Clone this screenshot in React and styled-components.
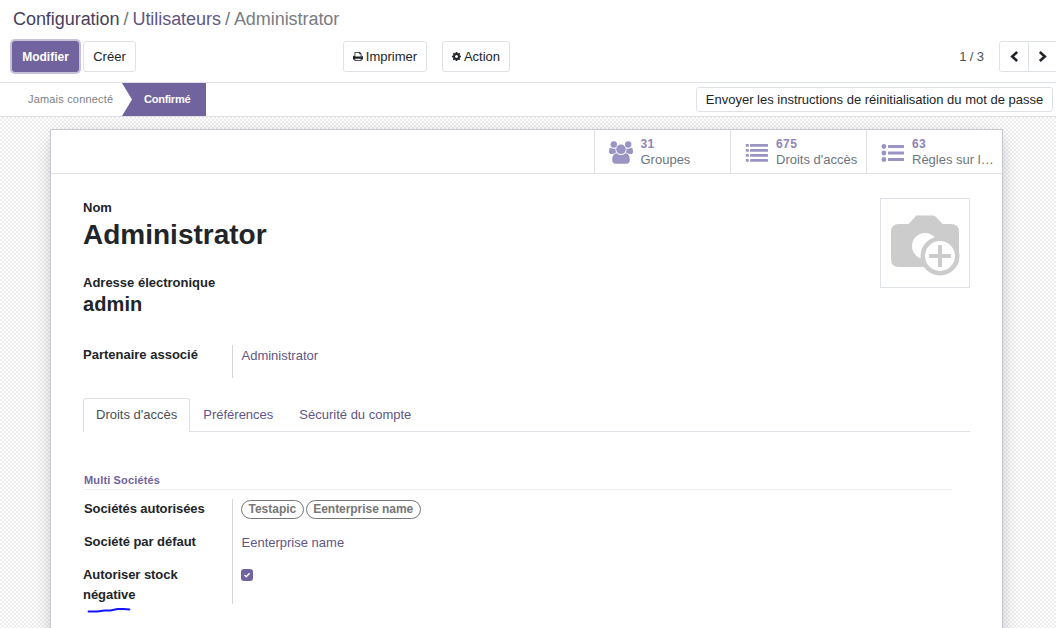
import React from "react";
import styled, { createGlobalStyle } from "styled-components";

const GlobalStyle = createGlobalStyle`
  * { box-sizing: border-box; }
  body {
    margin: 0;
    overflow: hidden;
    background: #fff;
    color: #212529;
    font-family: "Liberation Sans", Arial, sans-serif;
    font-size: 13px;
    line-height: 20px;
  }
`;

const Page = styled.div`
  display: flex;
  flex-direction: column;
  width: 1056px;
  height: 628px;
  overflow: hidden;
`;

const ControlPanel = styled.header`
  height: 83px;
  flex: none;
  padding: 8px 0 0 12px;
  border-bottom: 1px solid #dee2e6;
`;

const Breadcrumb = styled.nav`
  display: flex;
  gap: 4px;
  padding-left: 1px;
  font-size: 18px;
  line-height: 22px;
  color: #6c757d;
  white-space: nowrap;
`;

const Crumb = styled.span`
  color: ${(p) => p.$color};
  letter-spacing: -0.05px;
`;

const Toolbar = styled.div`
  display: flex;
  align-items: center;
  height: 31px;
  margin-top: 11px;
`;

const Button = styled.button`
  display: flex;
  align-items: center;
  justify-content: center;
  gap: 3px;
  flex: none;
  width: ${(p) => p.$width}px;
  height: ${(p) => p.$height || 31}px;
  margin-left: ${(p) => p.$offset || 0}px;
  padding: 0;
  border: 1px solid ${(p) => (p.$primary ? "#71639e" : "#dee2e6")};
  border-radius: 3px;
  background: ${(p) => (p.$primary ? "#71639e" : "#fff")};
  color: ${(p) => (p.$primary ? "#fff" : "#212529")};
  box-shadow: ${(p) => (p.$primary ? "0 0 0 2px #c6c1d8" : "none")};
  font: ${(p) => (p.$primary ? "bold" : "normal")} ${(p) => p.$size || 13}px "Liberation Sans", Arial, sans-serif;
  white-space: nowrap;
`;

const Pager = styled.div`
  display: flex;
  align-items: center;
  margin-left: auto;
  color: #495057;
`;

const PagerCount = styled.span`
  margin-right: 15px;
  letter-spacing: -0.1px;
`;

const PagerButton = styled.button`
  display: flex;
  align-items: center;
  justify-content: center;
  width: ${(p) => (p.$last ? 27 : 30)}px;
  height: 31px;
  padding: 0;
  border: 1px solid #dee2e6;
  border-right-width: ${(p) => (p.$last ? 0 : 1)}px;
  border-left-width: ${(p) => (p.$last ? 0 : 1)}px;
  border-radius: ${(p) => (p.$last ? "0" : "3px 0 0 3px")};
  background: #fff;
  color: #212529;
`;

const StatusBar = styled.div`
  display: flex;
  align-items: center;
  flex: none;
  height: 34px;
  padding: 0 3px 0 28px;
  border-bottom: 1px solid #dee2e6;
  font-size: 11px;
`;

const Stage = styled.span`
  width: 94px;
  padding-bottom: 1px;
  color: #7c7f84;
  letter-spacing: 0.18px;
`;

const ActiveStage = styled.span`
  width: 84px;
  height: 33px;
  padding-left: 22px;
  background: #71639e;
  clip-path: polygon(0 0, 100% 0, 100% 100%, 0 100%, 10px 50%);
  color: #fff;
  font-weight: bold;
  line-height: 33px;
  letter-spacing: -0.25px;
`;

const Content = styled.main`
  flex: 1;
  min-height: 0;
  padding: 12px 53px 0 50px;
  background: repeating-conic-gradient(#ededed 0 25%, #fff 0 50%) 0 0 / 4px 4px;
`;

const Sheet = styled.section`
  height: 560px;
  border: 1px solid #c8c8d3;
  background: #fff;
  box-shadow: 0 5px 20px -6px rgba(0, 0, 0, 0.35);
`;

const StatBox = styled.div`
  display: flex;
  justify-content: flex-end;
  height: 44px;
  border-bottom: 1px solid #dee2e6;
`;

const Stat = styled.div`
  display: flex;
  align-items: center;
  width: 136px;
  padding: 1px 0 0 14px;
  border-left: 1px solid #dee2e6;
  color: #9a94c4;

  svg {
    flex: none;
    margin-top: 1px;
  }
`;

const StatText = styled.div`
  display: flex;
  flex-direction: column;
  margin-left: ${(p) => p.$gap || 8}px;
  color: #6c757d;
  line-height: 15px;
  white-space: nowrap;
`;

const StatValue = styled.b`
  color: #8f84b7;
  font-size: 12px;
  letter-spacing: 0.4px;
`;

const SheetBody = styled.div`
  padding: 24px 32px 0;
`;

const TitleRow = styled.div`
  display: flex;
  justify-content: space-between;
  height: 147px;
`;

const TitleBlock = styled.div`
  display: flex;
  flex-direction: column;
`;

const Label = styled.label`
  font-weight: bold;
  line-height: 20px;
  letter-spacing: ${(p) => p.$spacing || "0"};
  margin-left: ${(p) => p.$shift || 0}px;
`;

const Name = styled.h1`
  margin: 0 0 22px;
  font-size: 28px;
  line-height: 33px;
`;

const Login = styled.h2`
  margin: 0;
  font-size: 20px;
  line-height: 22px;
  letter-spacing: 0.1px;
`;

const Avatar = styled.div`
  width: 90px;
  height: 90px;
  border: 1px solid #dee2e6;
`;

const Group = styled.div`
  display: grid;
  grid-template-columns: 149px 1fr;
`;

const LabelColumn = styled.div`
  display: flex;
  flex-direction: column;
  gap: 13px;
  padding-left: ${(p) => p.$inset || 0}px;
`;

const ValueColumn = styled.div`
  display: flex;
  flex-direction: column;
  gap: 13px;
  height: ${(p) => p.$height}px;
  padding-left: 8px;
  border-left: 1px solid #d5d7da;
`;

const LinkText = styled.span`
  height: 20px;
  padding-left: 0.5px;
  color: #5f5685;
  line-height: 22px;
`;

const Tabs = styled.div`
  display: flex;
  height: 34px;
  margin-top: 20px;
  border-bottom: 1px solid #dee2e6;
`;

const Tab = styled.span`
  height: 34px;
  padding: ${(p) => (p.$active ? "6px 12px" : "7px 13px")};
  border: ${(p) => (p.$active ? "1px solid #dee2e6" : "none")};
  border-bottom: none;
  border-radius: 3px 3px 0 0;
  background: ${(p) => (p.$active ? "#fff" : "transparent")};
  color: ${(p) => (p.$active ? "#495057" : "#5f5685")};
`;

const SectionTitle = styled.h3`
  width: 869px;
  margin: 38px 0 9px;
  padding: 1px 0 0 1px;
  border-bottom: 1px solid #f1f1f4;
  color: #71639e;
  font-size: 11px;
  line-height: 18px;
  letter-spacing: 0.15px;
`;

const Tags = styled.div`
  display: flex;
  gap: 2px;
  height: 20px;
  padding-top: 1px;
`;

const Tag = styled.span`
  height: 19px;
  padding: 0 6.5px;
  border: 1px solid #777;
  border-radius: 10px;
  color: #777;
  font-size: 12px;
  font-weight: bold;
  line-height: 16px;
  letter-spacing: ${(p) => p.$spacing || "0"};
`;

const Checkbox = styled.span`
  display: flex;
  align-items: center;
  justify-content: center;
  width: 12px;
  height: 12px;
  margin-top: 4px;
  border-radius: 3px;
  background: #71639e;
`;

const Stroke = styled.svg`
  display: block;
  margin: 1px 0 0 4px;
`;

const PrintIcon = () => (
  <svg width="10" height="11" viewBox="0 0 1664 1792" fill="currentColor">
    <path d="M384 1536h896v-256h-896v256zm0-640h896v-384h-160q-40 0-68-28t-28-68v-160h-640v640zm1152 64q0-26-19-45t-45-19-45 19-19 45 19 45 45 19 45-19 19-45zm128 0v416q0 13-9.5 22.5t-22.5 9.5h-224v160q0 40-28 68t-68 28h-960q-40 0-68-28t-28-68v-160h-224q-13 0-22.5-9.5t-9.5-22.5v-416q0-79 56.5-135.5t135.5-56.5h64v-544q0-40 28-68t68-28h672q40 0 88 20t76 48l152 152q28 28 48 76t20 88v256h64q79 0 135.5 56.5t56.5 135.5z" />
  </svg>
);

const CogIcon = () => (
  <svg width="9" height="9" viewBox="128 128 1536 1536" fill="currentColor">
    <path d="M1152 896q0-106-75-181t-181-75-181 75-75 181 75 181 181 75 181-75 75-181zm512-109v222q0 12-8 23t-20 13l-185 28q-19 54-39 91 35 50 107 138 10 12 10 25t-9 23q-27 37-99 108t-94 71q-12 0-26-9l-138-108q-44 23-91 38-16 136-29 186-7 28-36 28h-222q-14 0-24.5-8.5t-11.5-21.5l-28-184q-49-16-90-37l-141 107q-10 9-25 9-14 0-25-11-126-114-165-168-7-10-7-23 0-12 8-23 15-21 51-66.5t54-70.5q-27-50-41-99l-183-27q-13-2-21-12.5t-8-23.5v-222q0-12 8-23t19-13l186-28q14-46 39-92-40-57-107-138-10-12-10-24 0-10 9-23 26-36 98.5-107.5t94.5-71.5q13 0 26 10l138 107q44-23 91-38 16-136 29-186 7-28 36-28h222q14 0 24.5 8.5t11.5 21.5l28 184q49 16 90 37l142-107q9-9 24-9 13 0 25 10 129 119 165 170 7 8 7 22 0 12-8 23-15 21-51 66.5t-54 70.5q26 50 41 98l183 28q13 2 21 12.5t8 23.5z" />
  </svg>
);

const UsersIcon = () => (
  <svg width="24" height="23" viewBox="0 0 1920 1792" fill="currentColor">
    <path d="M593 896q-162 5-265 128H194q-82 0-138-40.5T0 865q0-353 124-353 6 0 43.500 21t97.500 42.500T384 597q67 0 133-23-5 37-5 66 0 139 81 256zm1071 637q0 120-73 189.500t-194 69.500H523q-121 0-194-69.500T256 1533q0-53 3.500-103.500t14-109T300 1212t43-97.500 62-81 85.500-53.500T602 960q10 0 43 21.500t73 48 107 48 135 21.500 135-21.500 107-48 73-48 43-21.500q61 0 111.500 20t85.500 53.500 62 81 43 97.500 26.500 108.500 14 109 3.500 103.500z" />
    <circle cx="384" cy="256" r="256" />
    <circle cx="960" cy="640" r="384" />
    <circle cx="1536" cy="256" r="256" />
    <path d="M1920 865q0 78-56 118.500t-138 40.500h-134q-103-123-265-128 81-117 81-256 0-29-5-66 66 23 133 23 59 0 119-21.500t97.500-42.500 43.500-21q124 0 124 353z" />
  </svg>
);

const ListIcon = () => (
  <svg width="23" height="18" viewBox="0 0 23 18" fill="currentColor">
    {[0, 5, 10, 15].map((y) => (
      <g key={y}>
        <rect x="0.8" y={y} width="3" height="2.8" rx="0.4" />
        <rect x="5" y={y} width="18" height="2.8" rx="0.4" />
      </g>
    ))}
  </svg>
);

const BulletListIcon = () => (
  <svg width="23" height="18" viewBox="0 0 23 18" fill="currentColor">
    {[2.5, 9, 15.5].map((y) => (
      <g key={y}>
        <circle cx="2.9" cy={y} r="2.4" />
        <rect x="7" y={y - 1.5} width="16" height="3" rx="0.5" />
      </g>
    ))}
  </svg>
);

const Chevron = ({ right }) => (
  <svg width="10" height="14" viewBox="0 0 10 14" fill="none" stroke="currentColor" strokeWidth="2.6">
    <path d={right ? "M1.8 2 6.800 6.500l-5 4.500" : "M8.200 2 3.200 6.500l5 4.500"} />
  </svg>
);

const CameraIcon = () => (
  <svg width="88" height="88" viewBox="0 0 88 88">
    <path
      d="M35 16.500h17q1.500 0 2.500 1L61.500 25H70q8 0 8 8v27q0 8-8 8H18q-8 0-8-8V33q0-8 8-8h9.500l7-7.500Q34 16.500 35 16.500z"
      fill="#ccc"
    />
    <circle cx="44" cy="47" r="13" fill="#fff" />
    <circle cx="59" cy="57" r="19.5" fill="#ccc" />
    <circle cx="59" cy="57" r="15" fill="#fff" />
    <path d="M59 46v22M48 57h22" stroke="#ccc" strokeWidth="4" />
  </svg>
);

export default function App() {
  return (
    <Page>
      <GlobalStyle />
      <ControlPanel>
        <Breadcrumb>
          <Crumb $color="#45405c">Configuration</Crumb>
          <span>/</span>
          <Crumb $color="#5f5685">Utilisateurs</Crumb>
          <span>/</span>
          <Crumb $color="#777d84">Administrator</Crumb>
        </Breadcrumb>
        <Toolbar>
          <Button $primary $width={67} $size={12}>Modifier</Button>
          <Button $width={53} $offset={4}>Créer</Button>
          <Button $width={84} $offset={207}><PrintIcon />Imprimer</Button>
          <Button $width={68} $offset={15}><CogIcon />Action</Button>
          <Pager>
            <PagerCount>1 / 3</PagerCount>
            <PagerButton><Chevron /></PagerButton>
            <PagerButton $last><Chevron right /></PagerButton>
          </Pager>
        </Toolbar>
      </ControlPanel>
      <StatusBar>
        <Stage>Jamais connecté</Stage>
        <ActiveStage>Confirmé</ActiveStage>
        <Button $width={357} $height={25} $offset={490}>
          Envoyer les instructions de réinitialisation du mot de passe
        </Button>
      </StatusBar>
      <Content>
        <Sheet>
          <StatBox>
            <Stat>
              <UsersIcon />
              <StatText $gap={7.5}><StatValue>31</StatValue>Groupes</StatText>
            </Stat>
            <Stat>
              <ListIcon />
              <StatText><StatValue>675</StatValue>Droits d'accès</StatText>
            </Stat>
            <Stat>
              <BulletListIcon />
              <StatText><StatValue>63</StatValue>Règles sur l…</StatText>
            </Stat>
          </StatBox>
          <SheetBody>
            <TitleRow>
              <TitleBlock>
                <Label>Nom</Label>
                <Name>Administrator</Name>
                <Label>Adresse électronique</Label>
                <Login>admin</Login>
              </TitleBlock>
              <Avatar><CameraIcon /></Avatar>
            </TitleRow>
            <Group>
              <LabelColumn><Label>Partenaire associé</Label></LabelColumn>
              <ValueColumn $height={33}><LinkText>Administrator</LinkText></ValueColumn>
            </Group>
            <Tabs>
              <Tab $active>Droits d'accès</Tab>
              <Tab>Préférences</Tab>
              <Tab>Sécurité du compte</Tab>
            </Tabs>
            <SectionTitle>Multi Sociétés</SectionTitle>
            <Group>
              <LabelColumn $inset={1}>
                <Label $spacing="-0.08px">Sociétés autorisées</Label>
                <Label $spacing="-0.05px">Société par défaut</Label>
                <Label $spacing="-0.05px" $shift={-1}>
                  Autoriser stock<br />négative
                  <Stroke width="44" height="8" viewBox="0 0 44 8" fill="none" stroke="#1414ff" strokeWidth="1.8">
                    <path d="M1.500 5.500h9l7-1h6l7-1.500h6l6 .5" strokeLinecap="round" />
                  </Stroke>
                </Label>
              </LabelColumn>
              <ValueColumn $height={105}>
                <Tags>
                  <Tag>Testapic</Tag>
                  <Tag $spacing="-0.05px">Eenterprise name</Tag>
                </Tags>
                <LinkText>Eenterprise name</LinkText>
                <Checkbox>
                  <svg width="8" height="8" viewBox="0 0 8 8" fill="none" stroke="#fff" strokeWidth="1.4">
                    <path d="M1.500 4 3.300 5.700 6.600 2.300" />
                  </svg>
                </Checkbox>
              </ValueColumn>
            </Group>
          </SheetBody>
        </Sheet>
      </Content>
    </Page>
  );
}
